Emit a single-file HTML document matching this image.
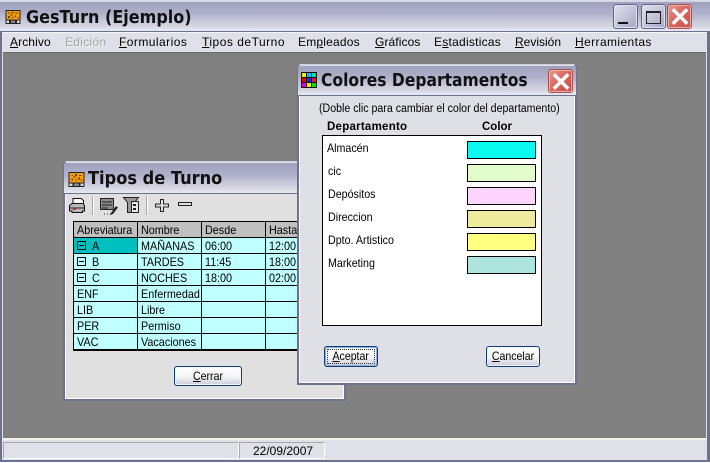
<!DOCTYPE html>
<html><head><meta charset="utf-8"><style>
*{box-sizing:border-box}
html,body{margin:0;padding:0;width:710px;height:463px;overflow:hidden;background:#fff}
body{position:relative;font-family:"Liberation Sans",sans-serif;font-size:12px;color:#000}
.a,.t{position:absolute}
.t{white-space:nowrap;line-height:14px}
.s{transform:scaleX(.89);transform-origin:0 50%}
u{text-decoration:underline}
.title{font-family:"DejaVu Sans",sans-serif;font-weight:bold;color:#111;line-height:22px;white-space:nowrap;position:absolute;transform:scaleX(.89);transform-origin:0 50%}
.grad{background:linear-gradient(180deg,#9fa0be 0%,#b0b1ca 40%,#d8d9e5 85%,#e8e9f0 100%)}
.btn{position:absolute;border:1px solid #0f3f78;border-radius:3px;background:linear-gradient(180deg,#fff 0%,#f6f6f8 50%,#d6d6e0 90%,#c4c4d4 100%);text-align:center;line-height:18px;font-size:12px;box-shadow:inset 0 0 0 1px #f4f4f8}
.btn span{display:inline-block;transform:scaleX(.88)}
.cap{position:absolute;border:1px solid #62648a;border-radius:3px;background:linear-gradient(135deg,#dfe0ec 0%,#c0c2d8 55%,#a4a6c4 100%);box-shadow:inset 0 0 0 1px #e0e1ee}
.x{position:absolute;border:1px solid #a5524e;border-radius:3px;background:linear-gradient(135deg,#e89a92 0%,#d9625c 50%,#c4504c 100%);box-shadow:inset 0 0 0 1px #ecb0aa}
.h{position:absolute;background:#000}
.cell{position:absolute;white-space:nowrap;line-height:14px;font-size:12px;transform:scaleX(.9);transform-origin:0 50%}
.sw{position:absolute;left:467px;width:69px;height:18px;border:1px solid #000}
</style></head><body>

<!-- main window -->
<div class="a" style="left:0;top:0;width:710px;height:463px;background:#dfe0e8"></div>
<div class="a" style="left:0;top:0;width:710px;height:2px;background:#d8d9e6"></div>
<div class="a grad" style="left:0;top:2px;width:710px;height:29px"></div>
<div class="a" style="left:0;top:31px;width:710px;height:1px;background:#6f7190"></div>
<div class="a" style="left:0;top:31px;width:2px;height:432px;background:#6f7190"></div>
<div class="a" style="left:707px;top:31px;width:3px;height:432px;background:#6f7190"></div>
<div class="a" style="left:2px;top:32px;width:705px;height:1px;background:#f4f4f8"></div>
<div class="a" style="left:0;top:460px;width:710px;height:3px;background:#6f7190"></div>
<div class="a" style="left:0;top:462px;width:710px;height:1px;background:#fff"></div>

<svg class="a" style="left:5px;top:10px" width="16" height="14" viewBox="0 0 17 16" shape-rendering="crispEdges">
<rect width="17" height="16" fill="#222"/><rect x="1" y="1" width="15" height="10" fill="#f5a010"/>
<path d="M3 3h2v1H3zM7 2h2v2H7zM11 3h3v1h-3zM5 5h3v1H5zM10 6h2v2h-2zM3 7h2v2H3zM7 8h2v1H7zM13 8h2v1h-2z" fill="#704000"/>
<rect x="1" y="12" width="3" height="3" fill="#ddd"/><rect x="6" y="12" width="5" height="3" fill="#888"/><rect x="13" y="12" width="3" height="3" fill="#ddd"/>
</svg>
<div class="title" style="left:26px;top:7px;font-size:18px">GesTurn (Ejemplo)</div>

<div class="cap" style="left:613px;top:4px;width:25px;height:25px"><div class="a" style="left:4px;top:17px;width:10px;height:2px;background:#111"></div></div>
<div class="cap" style="left:641px;top:4px;width:25px;height:25px"><div class="a" style="left:4px;top:6px;width:15px;height:13px;border:1px solid #222;border-top-width:2px"></div></div>
<div class="x" style="left:667px;top:4px;width:25px;height:25px"><svg class="a" style="left:3px;top:3px" width="18" height="17" viewBox="0 0 18 17"><path d="M3 2.500L15 14.500M15 2.500L3 14.500" stroke="#fff" stroke-width="3.500" stroke-linecap="square"/></svg></div>

<div class="t" style="left:10px;top:35px;letter-spacing:.1px"><u>A</u>rchivo</div>
<div class="t" style="left:65px;top:35px;color:#a4a4a4;letter-spacing:.3px;text-shadow:1px 1px 0 #f4f4f8">Edición</div>
<div class="t" style="left:119px;top:35px;letter-spacing:.45px"><u>F</u>ormularios</div>
<div class="t" style="left:202px;top:35px;letter-spacing:.5px"><u>T</u>ipos deTurno</div>
<div class="t" style="left:298px;top:35px;letter-spacing:.2px">Em<u>p</u>leados</div>
<div class="t" style="left:375px;top:35px;letter-spacing:.1px"><u>G</u>ráficos</div>
<div class="t" style="left:434px;top:35px;letter-spacing:.25px">E<u>s</u>tadisticas</div>
<div class="t" style="left:515px;top:35px"><u>R</u>evisión</div>
<div class="t" style="left:575px;top:35px;letter-spacing:.4px"><u>H</u>erramientas</div>

<!-- client -->
<div class="a" style="left:3px;top:52px;width:703px;height:386px;background:#808080"></div>
<div class="a" style="left:3px;top:52px;width:703px;height:1px;background:#6a6a6a"></div>
<div class="a" style="left:3px;top:438px;width:703px;height:2px;background:#f2f2e8"></div>

<!-- status -->
<div class="a" style="left:3px;top:442px;width:236px;height:17px;border:1px solid #a8a8a8;border-right-color:#fff;border-bottom-color:#fff"></div>
<div class="a" style="left:239px;top:442px;width:86px;height:17px;border:1px solid #a8a8a8;border-right-color:#fff;border-bottom-color:#fff"></div>
<div class="t" style="left:253px;top:444px">22/09/2007</div>

<!-- Tipos de Turno -->
<div class="a" style="left:63px;top:161px;width:283px;height:240px;background:#e0e0e0;border:2px solid #6f7190;border-top:1px solid #cfd0e0;border-radius:4px 4px 0 0;box-shadow:inset 1px -1px 0 #fff,inset -1px 0 0 #fff"></div>
<div class="a grad" style="left:64px;top:163px;width:281px;height:30px"></div>
<div class="a" style="left:64px;top:193px;width:281px;height:1px;background:#6f7190"></div>
<svg class="a" style="left:68px;top:172px" width="17" height="15" viewBox="0 0 17 16" shape-rendering="crispEdges">
<rect width="17" height="16" fill="#222"/><rect x="1" y="1" width="15" height="10" fill="#f5a010"/>
<path d="M3 3h2v1H3zM7 2h2v2H7zM11 3h3v1h-3zM5 5h3v1H5zM10 6h2v2h-2zM3 7h2v2H3zM7 8h2v1H7zM13 8h2v1h-2z" fill="#704000"/>
<rect x="1" y="12" width="3" height="3" fill="#ddd"/><rect x="6" y="12" width="5" height="3" fill="#888"/><rect x="13" y="12" width="3" height="3" fill="#ddd"/>
</svg>
<div class="title" style="left:88px;top:168px;font-size:18px;transform:scaleX(.9)">Tipos de Turno</div>

<!-- toolbar -->
<svg class="a" style="left:66px;top:195px" width="132" height="22" viewBox="0 0 132 22">
<path d="M7 9V3.500h8l2.500 2V9" fill="#fff" stroke="#111"/>
<path d="M3.500 10.500L6 8.500H17l1.500 2V16h-2v1.500H6V16H3.500z" fill="#b8b8b8" stroke="#111"/>
<path d="M4 13h14" stroke="#222"/><rect x="7" y="13" width="3" height="2" fill="#e01818"/>
<rect x="26" y="1" width="1" height="19" fill="#a8a8a8"/><rect x="27" y="1" width="1" height="19" fill="#fff"/>
<rect x="34.500" y="3.500" width="13" height="11" fill="#8a8a8a" stroke="#222"/>
<path d="M36 7h10M36 10h10M36 13h6" stroke="#222"/>
<path d="M45 18l5-7 2 1.500-5 6.500-3 1z" fill="#222"/>
<path d="M38 19h1M41 19h1M44 19h1" stroke="#222"/>
<path d="M57.500 2.500h15l-4 5v10h-7v-10z" fill="#999" stroke="#222"/>
<rect x="65.500" y="6.500" width="7" height="11" fill="#e8e8e8" stroke="#222"/>
<rect x="67" y="9" width="3" height="2" fill="#222"/><rect x="67" y="13" width="3" height="2" fill="#222"/>
<rect x="80" y="1" width="1" height="19" fill="#a8a8a8"/><rect x="81" y="1" width="1" height="19" fill="#fff"/>
<path d="M94.500 4.500h3v4.500h5v3h-5V16.500h-3v-4.500H89.500V9h5z" fill="#e0e0e0" stroke="#222"/>
<rect x="112.500" y="7.500" width="13" height="3" fill="#e0e0e0" stroke="#222"/>
</svg>

<!-- table -->
<div class="a" style="left:73px;top:221px;width:224px;height:16px;background:#c0c0c0"></div>
<div class="a" style="left:73px;top:237px;width:224px;height:112px;background:#bfffff"></div>
<div class="a" style="left:74px;top:238px;width:63px;height:15px;background:#00bfbf"></div>
<div class="h" style="left:73px;top:221px;width:224px;height:1px"></div>
<div class="h" style="left:73px;top:237px;width:224px;height:1px"></div>
<div class="h" style="left:73px;top:253px;width:224px;height:1px"></div>
<div class="h" style="left:73px;top:269px;width:224px;height:1px"></div>
<div class="h" style="left:73px;top:285px;width:224px;height:1px"></div>
<div class="h" style="left:73px;top:301px;width:224px;height:1px"></div>
<div class="h" style="left:73px;top:317px;width:224px;height:1px"></div>
<div class="h" style="left:73px;top:333px;width:224px;height:1px"></div>
<div class="h" style="left:73px;top:349px;width:224px;height:2px"></div>
<div class="h" style="left:73px;top:221px;width:1px;height:130px"></div>
<div class="h" style="left:137px;top:221px;width:1px;height:129px"></div>
<div class="h" style="left:201px;top:221px;width:1px;height:129px"></div>
<div class="h" style="left:265px;top:221px;width:1px;height:129px"></div>

<div class="cell" style="left:77px;top:223px">Abreviatura</div><div class="cell" style="left:141px;top:223px">Nombre</div><div class="cell" style="left:205px;top:223px">Desde</div><div class="cell" style="left:269px;top:223px">Hasta</div>

<div class="a" style="left:77px;top:241px;width:9px;height:9px;border:1px solid #000"><div class="a" style="left:1px;top:3px;width:5px;height:1px;background:#000"></div></div>
<div class="a" style="left:77px;top:257px;width:9px;height:9px;border:1px solid #000"><div class="a" style="left:1px;top:3px;width:5px;height:1px;background:#000"></div></div>
<div class="a" style="left:77px;top:273px;width:9px;height:9px;border:1px solid #000"><div class="a" style="left:1px;top:3px;width:5px;height:1px;background:#000"></div></div>
<div class="cell" style="left:92px;top:239px">A</div><div class="cell" style="left:141px;top:239px">MAÑANAS</div><div class="cell" style="left:205px;top:239px">06:00</div><div class="cell" style="left:269px;top:239px">12:00</div>
<div class="cell" style="left:92px;top:255px">B</div><div class="cell" style="left:141px;top:255px">TARDES</div><div class="cell" style="left:205px;top:255px">11:45</div><div class="cell" style="left:269px;top:255px">18:00</div>
<div class="cell" style="left:92px;top:271px">C</div><div class="cell" style="left:141px;top:271px">NOCHES</div><div class="cell" style="left:205px;top:271px">18:00</div><div class="cell" style="left:269px;top:271px">02:00</div>
<div class="cell" style="left:77px;top:287px">ENF</div><div class="cell" style="left:141px;top:287px">Enfermedad</div>
<div class="cell" style="left:77px;top:303px">LIB</div><div class="cell" style="left:141px;top:303px">Libre</div>
<div class="cell" style="left:77px;top:319px">PER</div><div class="cell" style="left:141px;top:319px">Permiso</div>
<div class="cell" style="left:77px;top:335px">VAC</div><div class="cell" style="left:141px;top:335px">Vacaciones</div>

<div class="btn" style="left:174px;top:366px;width:68px;height:20px"><span><u>C</u>errar</span></div>

<!-- Colores Departamentos -->
<div class="a" style="left:297px;top:64px;width:280px;height:321px;background:#dfdfe6;border:2px solid #6f7190;border-top:1px solid #cfd0e0;border-radius:4px 4px 0 0;box-shadow:inset 1px -1px 0 #fff,inset -1px 0 0 #fff"></div>
<div class="a grad" style="left:298px;top:66px;width:278px;height:29px"></div>
<div class="a" style="left:298px;top:95px;width:278px;height:1px;background:#6f7190"></div>
<svg class="a" style="left:301px;top:72px" width="16" height="16" viewBox="0 0 16 16" shape-rendering="crispEdges">
<rect width="16" height="16" fill="#111"/>
<rect x="1" y="1" width="4" height="4" fill="#f0f000"/><rect x="6" y="1" width="4" height="4" fill="#00c0f0"/><rect x="11" y="1" width="4" height="4" fill="#00e0a0"/>
<rect x="1" y="6" width="4" height="4" fill="#e00000"/><rect x="6" y="6" width="4" height="4" fill="#2020e0"/><rect x="11" y="6" width="4" height="4" fill="#e02020"/>
<rect x="1" y="11" width="4" height="4" fill="#e000e0"/><rect x="6" y="11" width="4" height="4" fill="#f0f000"/><rect x="11" y="11" width="4" height="4" fill="#00e000"/>
</svg>
<div class="title" style="left:321px;top:70px;font-size:18px;transform:scaleX(.863)">Colores Departamentos</div>
<div class="x" style="left:548px;top:69px;width:25px;height:24px"><svg class="a" style="left:3px;top:3px" width="18" height="17" viewBox="0 0 18 17"><path d="M3 2.500L15 14.500M15 2.500L3 14.500" stroke="#fff" stroke-width="3.500" stroke-linecap="square"/></svg></div>

<div class="t" style="left:319px;top:102px;font-size:11.500px;transform:scaleX(.923);transform-origin:0 50%">(Doble clic para cambiar el color del departamento)</div>
<div class="t" style="left:327px;top:120px;font-weight:bold;font-size:11.500px;letter-spacing:.25px">Departamento</div>
<div class="t" style="left:482px;top:120px;font-weight:bold;font-size:11.500px">Color</div>

<div class="a" style="left:322px;top:135px;width:220px;height:191px;background:#fff;border:1px solid #000"></div>
<div class="t s" style="left:327px;top:141px">Almacén</div>
<div class="t s" style="left:328px;top:164px">cic</div>
<div class="t s" style="left:328px;top:187px">Depósitos</div>
<div class="t s" style="left:328px;top:210px">Direccion</div>
<div class="t s" style="left:328px;top:233px">Dpto. Artistico</div>
<div class="t s" style="left:328px;top:256px">Marketing</div>
<div class="sw" style="top:141px;background:#0bfaf0"></div>
<div class="sw" style="top:164px;background:#e2fccb"></div>
<div class="sw" style="top:187px;background:#fed5fe"></div>
<div class="sw" style="top:210px;background:#eeeb9e"></div>
<div class="sw" style="top:233px;background:#ffff80"></div>
<div class="sw" style="top:256px;background:#ade4de"></div>

<div class="btn" style="left:324px;top:346px;width:54px;height:21px;line-height:19px;box-shadow:inset 0 0 0 1px #8ab0e0"><span><u>A</u>ceptar</span><div class="a" style="left:2px;top:2px;width:48px;height:15px;border:1px dotted #333"></div></div>
<div class="btn" style="left:486px;top:346px;width:54px;height:21px;line-height:19px"><span><u>C</u>ancelar</span></div>
</body></html>
